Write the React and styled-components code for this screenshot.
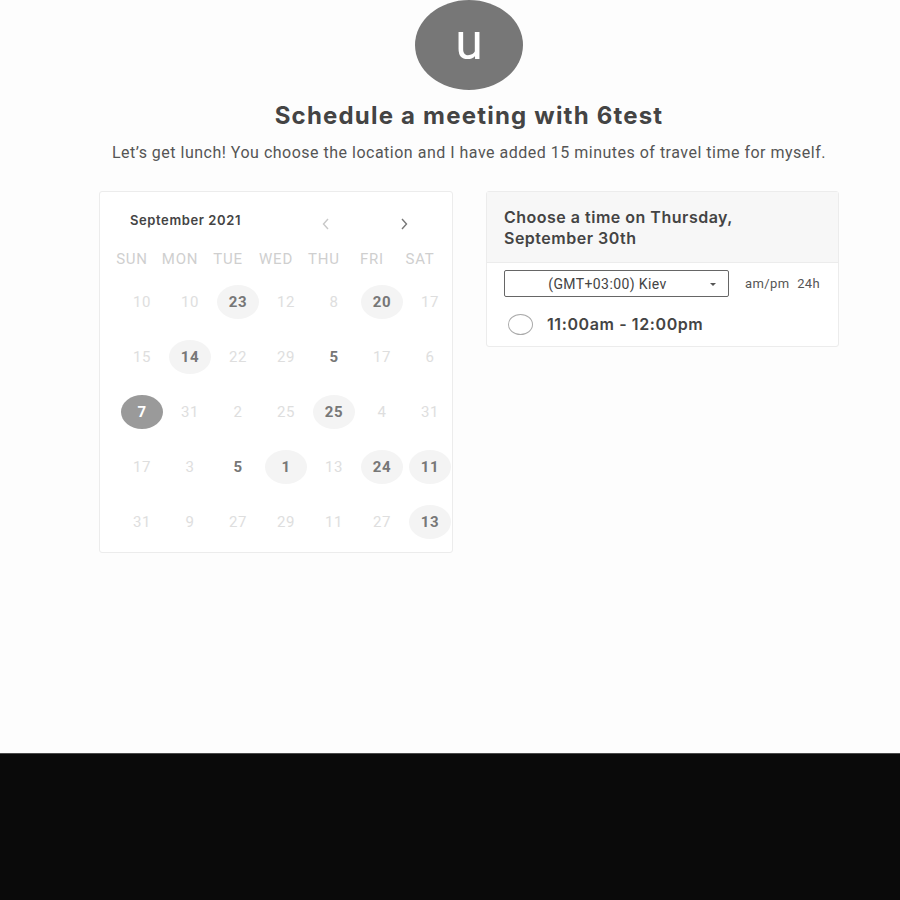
import React from 'react';
import styled, { createGlobalStyle } from 'styled-components';

const GlobalStyle = createGlobalStyle`
  html, body {
    margin: 0;
    padding: 0;
    background: #fdfdfd;
  }
  #root {
    min-height: 900px;
    display: flex;
    flex-direction: column;
  }
`;

const Page = styled.div`
  height: 753px;
  background: #fdfdfd;
  display: flex;
  flex-direction: column;
  align-items: center;
  padding-left: 38px;
  box-sizing: border-box;
  font-family: Roboto, 'Liberation Sans', sans-serif;
`;

const Footer = styled.div`
  flex: 1;
  background: #0a0a0a;
  border-top: 1px solid #4a4a4a;
`;

const Avatar = styled.div`
  width: 108px;
  height: 90px;
  border-radius: 50%;
  background: #777;
  color: #fff;
  display: flex;
  align-items: center;
  justify-content: center;
  font-size: 50px;
  line-height: 1;
  padding-bottom: 6px;
  box-sizing: border-box;
`;

const Title = styled.h1`
  margin: 12px 0 0;
  font-family: Inter, sans-serif;
  font-weight: 700;
  font-size: 24px;
  letter-spacing: 1.2px;
  line-height: 28px;
  color: #444;
`;

const Subtitle = styled.p`
  margin: 12px 0 0;
  font-size: 16px;
  letter-spacing: 0.5px;
  line-height: 21px;
  color: #555;
`;

const Panels = styled.div`
  display: flex;
  align-items: flex-start;
  gap: 33px;
  margin-top: 28px;
`;

const Card = styled.div`
  width: ${p => p.$w}px;
  box-sizing: border-box;
  border: 1px solid #ececec;
  border-radius: 3px;
  background: #fff;
`;

const MonthBar = styled.div`
  height: 56px;
  display: flex;
  align-items: flex-start;
  padding-top: 20px;
  box-sizing: border-box;
`;

const MonthLabel = styled.div`
  margin-left: 30px;
  width: 180px;
  font-family: Inter, sans-serif;
  font-size: 13px;
  font-weight: 600;
  letter-spacing: 0.6px;
  color: #444;
`;

const Chevron = styled.div`
  margin-left: ${p => p.$ml}px;
  margin-top: 5px;
  color: ${p => (p.$dim ? '#c8c8c8' : '#777')};
  display: flex;
`;

const Grid = styled.div`
  display: grid;
  grid-template-columns: repeat(7, 48px);
  padding-left: ${p => p.$pl}px;
`;

const WeekDay = styled.div`
  height: 22px;
  line-height: 22px;
  text-align: center;
  font-size: 15px;
  color: #cfcfcf;
  letter-spacing: 0.8px;
`;

const DayRows = styled(Grid)`
  margin-top: 4px;
  padding-bottom: 3px;
  grid-auto-rows: 55px;
`;

const DayCell = styled.div`
  display: flex;
  align-items: center;
  justify-content: center;
`;

const Day = styled.div`
  width: 42px;
  height: 34px;
  border-radius: 50%;
  display: flex;
  align-items: center;
  justify-content: center;
  font-size: 15px;
  letter-spacing: 0.6px;
  background: ${p => (p.$sel ? '#9a9a9a' : p.$circle ? '#f4f4f4' : 'transparent')};
  color: ${p => (p.$sel ? '#fff' : p.$bold ? '#777' : '#dedede')};
  font-weight: ${p => (p.$bold || p.$sel ? 700 : 400)};
`;

const TimeHeader = styled.div`
  background: #f7f7f7;
  border-bottom: 1px solid #ececec;
  height: 71px;
  box-sizing: border-box;
  padding: 15px 17px 0;
  font-family: Inter, sans-serif;
  font-weight: 600;
  font-size: 16px;
  letter-spacing: 0.5px;
  line-height: 21px;
  color: #444;
`;

const TimeBody = styled.div`
  padding: 7px 17px 9px;
`;

const ZoneRow = styled.div`
  display: flex;
  align-items: center;
`;

const Select = styled.div`
  position: relative;
  width: 225px;
  height: 27px;
  box-sizing: border-box;
  border: 1px solid #666;
  border-radius: 2px;
  display: flex;
  align-items: center;
  justify-content: center;
  padding-right: 18px;
  font-size: 14px;
  letter-spacing: 0.4px;
  color: #444;
`;

const Caret = styled.span`
  position: absolute;
  right: 12px;
  top: 12px;
  border-left: 3px solid transparent;
  border-right: 3px solid transparent;
  border-top: 3px solid #555;
`;

const Format = styled.div`
  margin-left: 16px;
  font-size: 13px;
  letter-spacing: 0.4px;
  color: #555;
  word-spacing: 4px;
`;

const Slot = styled.div`
  display: flex;
  align-items: center;
  margin-top: 14px;
  height: 26px;
`;

const Radio = styled.span`
  width: 25px;
  height: 21px;
  border-radius: 50%;
  border: 1px solid #aaa;
  box-sizing: border-box;
  margin-left: 4px;
`;

const SlotText = styled.span`
  margin-left: 14px;
  font-family: Inter, sans-serif;
  font-weight: 600;
  font-size: 16px;
  letter-spacing: 0.6px;
  color: #444;
`;

const week = ['SUN', 'MON', 'TUE', 'WED', 'THU', 'FRI', 'SAT'];

// [label, bold, circle, selected]
const days = [
  ['10'], ['10'], ['23', 1, 1], ['12'], ['8'], ['20', 1, 1], ['17'],
  ['15'], ['14', 1, 1], ['22'], ['29'], ['5', 1], ['17'], ['6'],
  ['7', 1, 1, 1], ['31'], ['2'], ['25'], ['25', 1, 1], ['4'], ['31'],
  ['17'], ['3'], ['5', 1], ['1', 1, 1], ['13'], ['24', 1, 1], ['11', 1, 1],
  ['31'], ['9'], ['27'], ['29'], ['11'], ['27'], ['13', 1, 1],
];

const ChevronIcon = ({ dir }) => (
  <svg width="10" height="14" viewBox="0 0 10 14" fill="none" stroke="currentColor" strokeWidth="1.4">
    {dir === 'left' ? <path d="M7 2 L2.5 7 L7 12" /> : <path d="M3 2 L7.5 7 L3 12" />}
  </svg>
);

export default function App() {
  return (
    <>
      <GlobalStyle />
      <Page>
        <Avatar>u</Avatar>
        <Title>Schedule a meeting with 6test</Title>
        <Subtitle>Let’s get lunch! You choose the location and I have added 15 minutes of travel time for myself.</Subtitle>
        <Panels>
          <Card $w={354}>
            <MonthBar>
              <MonthLabel>September 2021</MonthLabel>
              <Chevron $ml={11} $dim><ChevronIcon dir="left" /></Chevron>
              <Chevron $ml={68}><ChevronIcon dir="right" /></Chevron>
            </MonthBar>
            <Grid $pl={8}>
              {week.map(w => <WeekDay key={w}>{w}</WeekDay>)}
            </Grid>
            <DayRows $pl={18}>
              {days.map(([d, bold, circle, sel], i) => (
                <DayCell key={i}>
                  <Day $bold={bold} $circle={circle} $sel={sel}>{d}</Day>
                </DayCell>
              ))}
            </DayRows>
          </Card>
          <Card $w={353}>
            <TimeHeader>
              Choose a time on Thursday,<br />September 30th
            </TimeHeader>
            <TimeBody>
              <ZoneRow>
                <Select>
                  (GMT+03:00) Kiev
                  <Caret />
                </Select>
                <Format>am/pm 24h</Format>
              </ZoneRow>
              <Slot>
                <Radio />
                <SlotText>11:00am - 12:00pm</SlotText>
              </Slot>
            </TimeBody>
          </Card>
        </Panels>
      </Page>
      <Footer />
    </>
  );
}
